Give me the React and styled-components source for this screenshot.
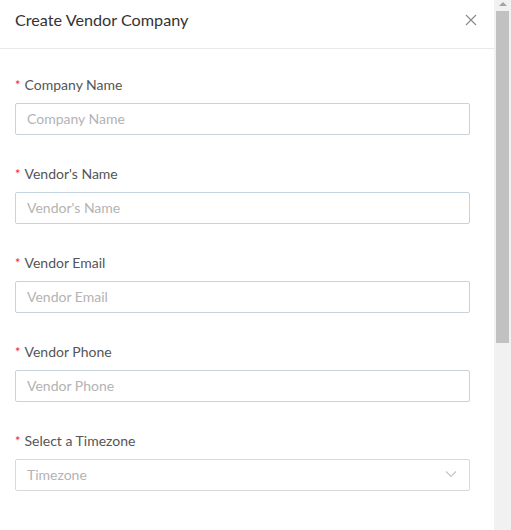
import React from 'react';
import styled, { createGlobalStyle } from 'styled-components';

const GlobalStyle = createGlobalStyle`
  html, body {
    margin: 0;
    padding: 0;
    background: #ffffff;
  }
  * {
    box-sizing: border-box;
  }
`;

const Page = styled.div`
  display: flex;
  width: 511px;
  height: 530px;
  background: #ffffff;
  font-family: 'Lato', 'Open Sans', sans-serif;
`;

const Drawer = styled.div`
  flex: 1;
  min-width: 0;
  overflow: hidden;
`;

// drawn scrollbar, since the headless browser hides native ones
const ScrollTrack = styled.div`
  width: 17px;
  flex-shrink: 0;
  display: flex;
  flex-direction: column;
  align-items: center;
  background: #f1f1f1;
`;

const ScrollArrow = styled.div`
  height: 11px;
  display: flex;
  align-items: center;
  justify-content: center;
  padding-bottom: 3px;

  &::before {
    content: '';
    width: 0;
    height: 0;
    border-left: 4px solid transparent;
    border-right: 4px solid transparent;
    border-bottom: 4px solid #a3a3a3;
  }
`;

const ScrollThumb = styled.div`
  width: 13px;
  height: 332px;
  background: #c1c1c1;
`;

const Header = styled.div`
  display: flex;
  align-items: center;
  justify-content: space-between;
  height: 49px;
  padding: 0 16px 9px 15px;
  border-bottom: 1px solid #e8e8e8;
`;

const Title = styled.h2`
  margin: 0;
  font-size: 16.2px;
  font-weight: 400;
  color: #333333;
`;

const CloseButton = styled.button`
  border: 0;
  background: none;
  padding: 0;
  width: 14px;
  height: 14px;
  display: flex;
  align-items: center;
  justify-content: center;
  cursor: pointer;
`;

const Body = styled.form`
  padding: 26px 24px 0 15px;
`;

const Field = styled.div`
  margin-bottom: 29px;
`;

const Label = styled.label`
  display: block;
  height: 20px;
  line-height: 20px;
  margin-bottom: 8px;
  font-size: 14px;
  color: #555555;

  &::before {
    content: '*';
    color: #f5222d;
    margin-right: 4px;
    font-size: 13px;
  }
`;

const Input = styled.input`
  display: block;
  width: 100%;
  height: 32px;
  padding: 0 11px 2px;
  border: 1px solid #c5d3df;
  border-radius: 2px;
  font-family: inherit;
  font-size: 14px;
  color: #333;
  outline: none;

  &::placeholder {
    color: #b3b3b3;
  }
`;

const SelectBox = styled.div`
  display: flex;
  align-items: center;
  justify-content: space-between;
  height: 32px;
  padding: 0 12px 2px 11px;
  border: 1px solid #d9d9d9;
  border-radius: 2px;
  font-size: 14px;
  color: #b3b3b3;
`;

const fields = ['Company Name', "Vendor's Name", 'Vendor Email', 'Vendor Phone'];

export default function App() {
  return (
    <>
      <GlobalStyle />
      <Page>
        <Drawer>
          <Header>
            <Title>Create Vendor Company</Title>
            <CloseButton type="button" aria-label="Close">
              <svg width="12" height="12" viewBox="0 0 12 12">
                <path d="M1 1L11 11M11 1L1 11" stroke="#8c8c8c" strokeWidth="1.2" fill="none" />
              </svg>
            </CloseButton>
          </Header>
          <Body>
            {fields.map((f) => (
              <Field key={f}>
                <Label>{f}</Label>
                <Input placeholder={f} />
              </Field>
            ))}
            <Field>
              <Label>Select a Timezone</Label>
              <SelectBox>
                <span>Timezone</span>
                <svg width="12" height="8" viewBox="0 0 12 8">
                  <path d="M1 1.5L6 6.5L11 1.5" stroke="#c4c4c4" strokeWidth="1.1" fill="none" />
                </svg>
              </SelectBox>
            </Field>
          </Body>
        </Drawer>
        <ScrollTrack>
          <ScrollArrow />
          <ScrollThumb />
        </ScrollTrack>
      </Page>
    </>
  );
}
